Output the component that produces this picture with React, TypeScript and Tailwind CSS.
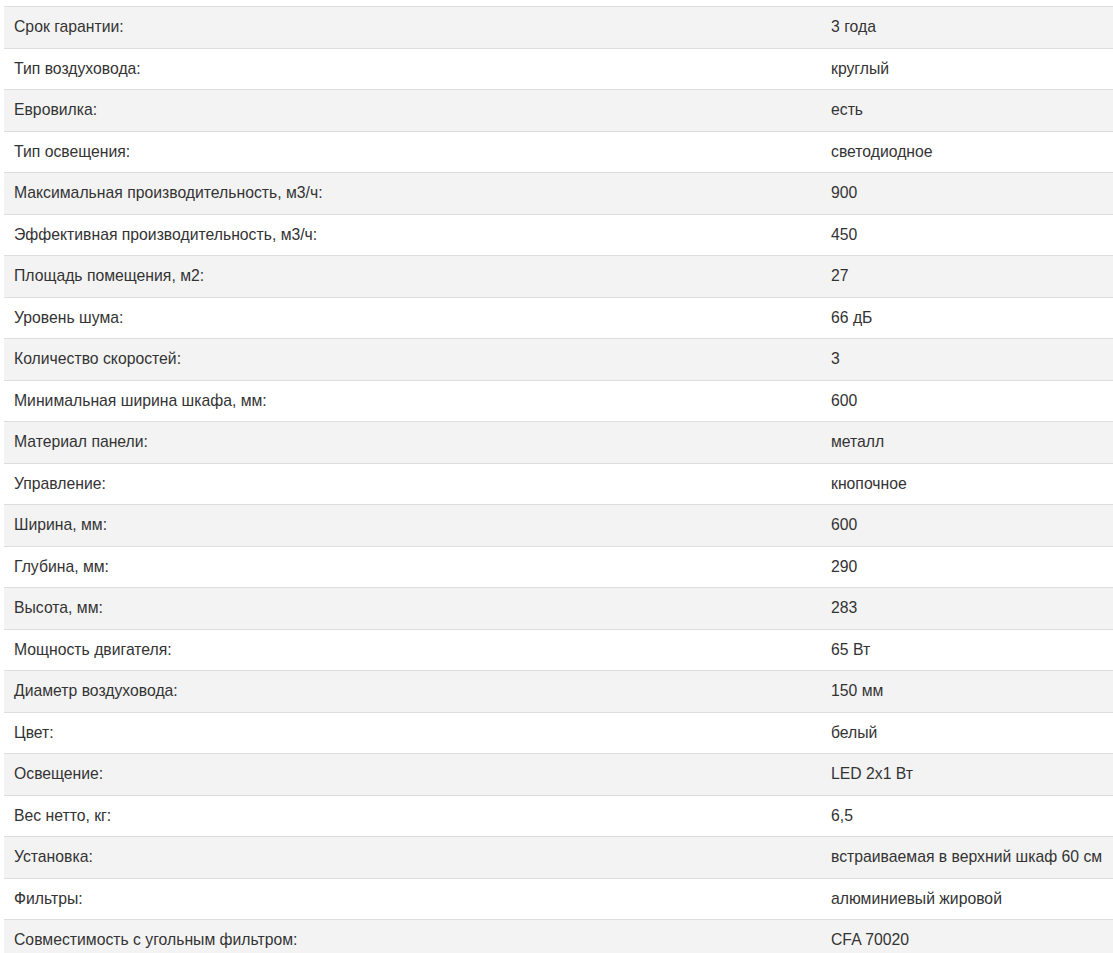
const specs: [string, string][] = [
  ["Срок гарантии:", "3 года"],
  ["Тип воздуховода:", "круглый"],
  ["Евровилка:", "есть"],
  ["Тип освещения:", "светодиодное"],
  ["Максимальная производительность, м3/ч:", "900"],
  ["Эффективная производительность, м3/ч:", "450"],
  ["Площадь помещения, м2:", "27"],
  ["Уровень шума:", "66 дБ"],
  ["Количество скоростей:", "3"],
  ["Минимальная ширина шкафа, мм:", "600"],
  ["Материал панели:", "металл"],
  ["Управление:", "кнопочное"],
  ["Ширина, мм:", "600"],
  ["Глубина, мм:", "290"],
  ["Высота, мм:", "283"],
  ["Мощность двигателя:", "65 Вт"],
  ["Диаметр воздуховода:", "150 мм"],
  ["Цвет:", "белый"],
  ["Освещение:", "LED 2x1 Вт"],
  ["Вес нетто, кг:", "6,5"],
  ["Установка:", "встраиваемая в верхний шкаф 60 см"],
  ["Фильтры:", "алюминиевый жировой"],
  ["Совместимость с угольным фильтром:", "CFA 70020"],
];

export default function App() {
  return (
    <div className="bg-white pt-[6px] pl-[4px] font-['Liberation_Sans',Arial,sans-serif] text-[15.75px] text-[#333]">
      <table className="w-[1109px] border-collapse">
        <tbody>
          {specs.map(([label, value], i) => (
            <tr key={i} className={i % 2 === 0 ? "bg-[#f3f3f3]" : "bg-white"}>
              <td className="w-[817px] border-t border-[#dddddd] px-[10px] py-[10px] leading-[20.5px]">{label}</td>
              <td className="border-t border-[#dddddd] px-[10px] py-[10px] leading-[20.5px]">{value}</td>
            </tr>
          ))}
        </tbody>
      </table>
    </div>
  );
}
